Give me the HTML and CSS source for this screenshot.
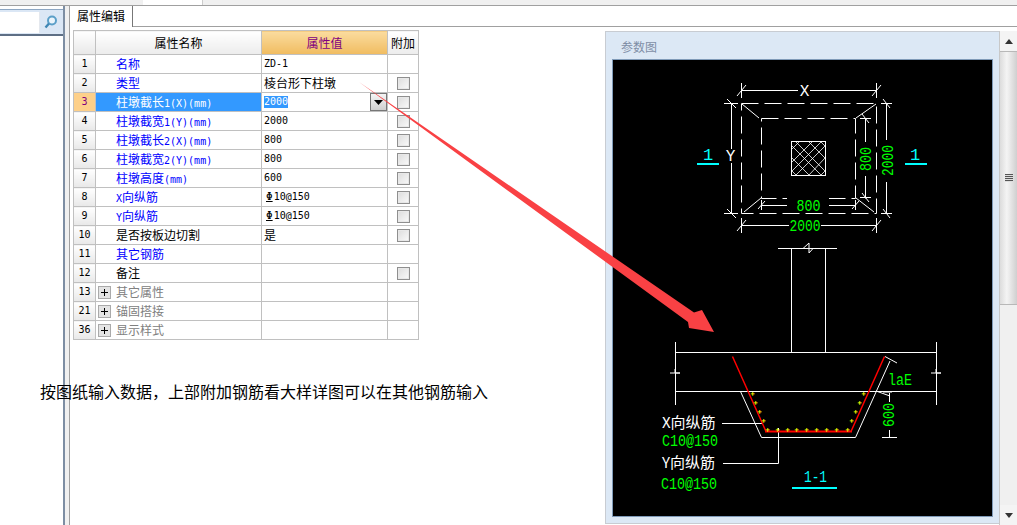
FILE: index.html
```html
<!DOCTYPE html>
<html lang="zh">
<head>
<meta charset="utf-8">
<title>属性编辑</title>
<link rel="stylesheet" href="styles.css">
</head>
<body>
<div class="app">
  <div class="topstrip"><span class="top-white"></span></div>
  <div class="main">
    <aside class="side">
      <div class="side-search">
        <div class="side-input"></div>
        <svg class="search-icon" width="14" height="14" viewBox="0 0 14 14"><circle cx="8" cy="5.500" r="4" fill="#eaf4fb" stroke="#5b9fc8" stroke-width="2"/><path d="M5 8.500 1.500 12.500" stroke="#3f87b5" stroke-width="2.400" fill="none"/></svg>
      </div>
      <div class="side-body"></div>
    </aside>
    <div class="gutter"></div>
    <section class="editor">
      <div class="tabs"><div class="tab">属性编辑</div><div class="tab-fill"></div></div>
      <div class="content">
        <div class="grid-area">
          <table class="props">
            <colgroup><col class="c-n"><col class="c-name"><col class="c-val"><col class="c-add"></colgroup>
            <thead>
              <tr><th class="num"></th><th class="h-name">属性名称</th><th class="h-val">属性值</th><th class="h-add">附加</th></tr>
            </thead>
            <tbody>
              <tr><td class="num">1</td><td class="name blue">名称</td><td class="val">ZD-1</td><td class="add"></td></tr>
              <tr><td class="num">2</td><td class="name blue">类型</td><td class="val cjk">棱台形下柱墩</td><td class="add"><span class="check"></span></td></tr>
              <tr class="sel"><td class="num">3</td><td class="name">柱墩截长<span class="lat">1(X)(mm)</span></td><td class="val editing"><span class="selected">2000</span><span class="drop"><svg width="9" height="5" viewBox="0 0 9 5"><path d="M0 0h9L4.500 5z" fill="#000"/></svg></span></td><td class="add"><span class="check"></span></td></tr>
              <tr><td class="num">4</td><td class="name blue">柱墩截宽<span class="lat">1(Y)(mm)</span></td><td class="val">2000</td><td class="add"><span class="check"></span></td></tr>
              <tr><td class="num">5</td><td class="name blue">柱墩截长<span class="lat">2(X)(mm)</span></td><td class="val">800</td><td class="add"><span class="check"></span></td></tr>
              <tr><td class="num">6</td><td class="name blue">柱墩截宽<span class="lat">2(Y)(mm)</span></td><td class="val">800</td><td class="add"><span class="check"></span></td></tr>
              <tr><td class="num">7</td><td class="name blue">柱墩高度<span class="lat">(mm)</span></td><td class="val">600</td><td class="add"><span class="check"></span></td></tr>
              <tr><td class="num">8</td><td class="name blue"><span class="lat">X</span>向纵筋</td><td class="val"><span class="rebar">Φ</span>10@150</td><td class="add"><span class="check"></span></td></tr>
              <tr><td class="num">9</td><td class="name blue"><span class="lat">Y</span>向纵筋</td><td class="val"><span class="rebar">Φ</span>10@150</td><td class="add"><span class="check"></span></td></tr>
              <tr><td class="num">10</td><td class="name">是否按板边切割</td><td class="val cjk">是</td><td class="add"><span class="check"></span></td></tr>
              <tr><td class="num">11</td><td class="name blue">其它钢筋</td><td class="val"></td><td class="add"></td></tr>
              <tr><td class="num">12</td><td class="name">备注</td><td class="val"></td><td class="add"><span class="check"></span></td></tr>
              <tr class="group"><td class="num">13</td><td class="name"><span class="plus"></span>其它属性</td><td class="val"></td><td class="add"></td></tr>
              <tr class="group"><td class="num">21</td><td class="name"><span class="plus"></span>锚固搭接</td><td class="val"></td><td class="add"></td></tr>
              <tr class="group"><td class="num">36</td><td class="name"><span class="plus"></span>显示样式</td><td class="val"></td><td class="add"></td></tr>
            </tbody>
          </table>
        </div>
        <div class="param">
          <div class="param-title">参数图</div>
          <div class="param-frame">
            <svg class="drawing" width="379" height="456" viewBox="613 60 379 456">
              <g class="w">
                <path d="M741.500 90.500H876.500M741.500 83V98M876.500 83V98M737 96 746 85M872 96 881 85"/>
                <path class="dash-a" d="M741.500 103.500H876.500V213.500H741.500Z"/>
                <path class="dash-b" d="M761.500 118.500H855.500V198.500H761.500Z"/>
                <path d="M742 104 759 118M876 104 856 118M744 212 761 198M874 212 856 198"/>
                <path d="M731.500 103.500V213.500M724 103.500H738M724 213.500H738M727 99 736 108M727 209 736 218"/>
                <path d="M886.500 103.500V213.500M881 103.500H892M881 213.500H892M883 99 890 108M883 209 890 218"/>
                <path d="M865.500 118.500V198.500M860 118.500H871M860 197.500H871M862 114 869 123M862 193 869 202"/>
                <path d="M761.500 205.500H855.500M761.500 200V210M855.500 200V210M758 209 765 201M852 209 859 201"/>
                <path d="M741.500 225.500H876.500M741.500 218V233M876.500 218V233M737 231 746 220M872 231 881 220"/>
                <rect x="791.500" y="141.500" width="34" height="34"/>
                <path class="thin" d="M792 149 799 142M792 162 812 142M792 171 821 142M796 175 825 146M809 175 825 158M821 175 825 171M796 142 825 171M809 142 825 158M821 142 825 146M792 146 821 175M792 158 809 175M792 171 796 175"/>
                <path d="M778 248.500H837M791.500 248.500V352.500M825.500 248.500V352.500M803 248.500 809 243V253L813 248.500"/>
                <path d="M675.500 342V405M936.500 342V405M675.500 352.500H936.500M675.500 391.500H936.500"/>
                <path d="M670 373H680M675 369V373L680 373M931 373H941M936 369V373L941 373"/>
                <path d="M740.500 391.500 761.500 437.500H855.500L890 361"/>
                <path d="M885 356.500 897 363M876 391 890 396M722 423.500H762M723 463.500H778.500V428"/>
                <path d="M889.500 393V437.500M882 437.500H897M883 392H892"/>
              </g>
              <path class="red-side" d="M732.500 356.500 766 431.500M851 431.500 884.500 356.500"/>
              <path class="red" d="M765 431.500H852"/>
              <g class="yellow">
                <text x="767.500" y="431.500">+</text><text x="777.500" y="431.500">+</text><text x="787.500" y="431.500">+</text><text x="796.500" y="431.500">+</text><text x="806.500" y="431.500">+</text><text x="816.500" y="431.500">+</text><text x="826.500" y="431.500">+</text><text x="836.500" y="431.500">+</text><text x="847.500" y="431.500">+</text>
                <text x="763.500" y="422.500">+</text><text x="759.500" y="413.500">+</text><text x="755.500" y="404.500">+</text><text x="752.500" y="395.500">+</text>
                <text x="851.500" y="422.500">+</text><text x="855.500" y="413.500">+</text><text x="859.500" y="404.500">+</text><text x="863.500" y="395.500">+</text>
              </g>
              <g class="cyan-lines">
                <path d="M697 164H719M905 164H927M792 488H837"/>
              </g>
              <g class="cad cyan">
                <text x="708" y="160" text-anchor="middle">1</text>
                <text x="915" y="160" text-anchor="middle">1</text>
                <text x="804" y="482" textLength="23" lengthAdjust="spacingAndGlyphs">1-1</text>
              </g>
              <g class="cad white">
                <rect class="knock" x="798" y="84" width="12" height="12"/>
                <text x="804.500" y="96" text-anchor="middle">X</text>
                <rect class="knock" x="725" y="149" width="13" height="14"/>
                <text x="730.500" y="161" text-anchor="middle">Y</text>
              </g>
              <g class="cad green">
                <rect class="knock" x="787" y="198" width="42" height="14"/>
                <text x="796.500" y="211" textLength="24" lengthAdjust="spacingAndGlyphs">800</text>
                <rect class="knock" x="789" y="218" width="32" height="14"/>
                <text x="789.500" y="231" textLength="31" lengthAdjust="spacingAndGlyphs">2000</text>
                <rect class="knock" x="859" y="142" width="14" height="34"/>
                <text transform="translate(871 171) rotate(-90)" textLength="24" lengthAdjust="spacingAndGlyphs">800</text>
                <rect class="knock" x="880" y="140" width="14" height="42"/>
                <text transform="translate(893 176) rotate(-90)" textLength="31" lengthAdjust="spacingAndGlyphs">2000</text>
                <rect class="knock" x="882" y="402" width="14" height="28"/>
                <text transform="translate(894 427) rotate(-90)" textLength="24" lengthAdjust="spacingAndGlyphs">600</text>
                <text x="888" y="385" textLength="24" lengthAdjust="spacingAndGlyphs">laE</text>
                <text x="662" y="446" textLength="56" lengthAdjust="spacingAndGlyphs">C10@150</text>
                <text x="661" y="489" textLength="56" lengthAdjust="spacingAndGlyphs">C10@150</text>
              </g>
              <g class="cad-label">
                <text x="662" y="428">X向纵筋</text>
                <text x="662" y="468">Y向纵筋</text>
              </g>
            </svg>
          </div>
        </div>
        <div class="scrollbar">
          <div class="sb-btn"><span class="arrow-up"></span></div>
          <div class="sb-thumb"><span class="grip"></span></div>
          <div class="sb-track"></div>
          <div class="sb-btn"><span class="arrow-down"></span></div>
        </div>
      </div>
    </section>
  </div>
  <svg class="arrow" width="1017" height="525" viewBox="0 0 1017 525"><path d="M359 82 694 312.500 702 310 714 332 689 328 688 322Z"/></svg>
  <p class="note">按图纸输入数据，上部附加钢筋看大样详图可以在其他钢筋输入</p>
</div>
</body>
</html>
```
FILE: styles.css
```css
* { box-sizing: border-box; }
html, body { margin: 0; padding: 0; }
body { width: 1017px; height: 525px; overflow: hidden; background: #fff; font-family: "Noto Sans CJK SC", "Liberation Sans", sans-serif; font-size: 12px; color: #000; }
.app { position: relative; width: 1017px; height: 525px; overflow: hidden; }
.topstrip { height: 6px; background: #f0f0f0; border-bottom: 1px solid #a0a0a0; display: flex; padding-left: 143px; }
.top-white { width: 60px; height: 5px; background: #fff; border-right: 1px solid #ccc; }
.main { display: flex; height: 519px; }
.side { width: 65px; display: flex; flex-direction: column; background: #fff; border-right: 2px solid #7d8ea3; padding-top: 3px; position: relative; }
.side-search { height: 27px; flex: none; background: #dbe7f5; border-top: 1px solid #8da6c2; border-bottom: 2px solid #5e6f85; display: flex; align-items: center; padding: 0 5px 0 0; justify-content: space-between; }
.side-input { width: 40px; height: 21px; background: #fff; border-right: 1px solid #e4e8ee; }
.search-icon { flex: none; }
.side-body { flex: 1; background: #fff; }
.gutter { width: 4px; background: #f0f0f0; }
.editor { flex: 1; min-width: 0; display: flex; flex-direction: column; border-left: 1px solid #a0a0a0; }
.tabs { display: flex; height: 21px; flex: none; }
.tab { width: 63px; height: 21px; background: #fff; border-right: 1px solid #777; padding-left: 7px; line-height: 19px; font-size: 12px; }
.tab-fill { flex: 1; border-bottom: 1px solid #a0a0a0; }
.content { flex: 1; display: flex; min-height: 0; padding-top: 3px; }
.grid-area { width: 535px; padding-left: 3px; flex: none; }
.props { border-collapse: collapse; table-layout: fixed; width: 346px; font-size: 12px; }
.c-n { width: 22px; } .c-name { width: 166px; } .c-val { width: 126px; } .c-add { width: 31px; }
.props th, .props td { border: 1px solid #c0c0c0; padding: 0; height: 19px; font-weight: normal; line-height: 14px; white-space: nowrap; overflow: hidden; }
.props th { height: 24px; text-align: center; background: linear-gradient(#fff, #ececec); }
.props .h-val { background: linear-gradient(#fbdc9f, #f0bc60); color: #800080; }
.props .num { text-align: center; background: linear-gradient(#fff, #e8e8e8); font-family: "DejaVu Sans Mono", "Liberation Mono", monospace; font-size: 10px; }
.props .name { padding-left: 20px; position: relative; }
.blue { color: #0000ff; }
.lat { font-family: "DejaVu Sans Mono", "Liberation Mono", monospace; font-size: 10px; line-height: 1; }
.props .val { padding-left: 2px; font-family: "DejaVu Sans Mono", "Liberation Mono", "Noto Sans CJK SC", monospace; font-size: 10px; position: relative; }
.props .val.cjk { font-family: "Noto Sans CJK SC", sans-serif; font-size: 12px; }
.rebar { text-decoration: underline; margin-left: 2px; margin-right: 1px; font-size: 11px; line-height: 1; }
.props .add { text-align: center; font-size: 0; line-height: 0; }
.check { display: inline-block; width: 13px; height: 13px; border: 1px solid #8f8f8f; background: linear-gradient(135deg, #dcdcdc, #fafafa); box-shadow: inset 0 0 0 1px #e8e8e8; }
.sel .num { background: #fdd08a; color: #800080; }
.sel .name { background: #3399ff; color: #fff; }
.selected { background: #3399ff; color: #fff; display: inline-block; line-height: 12px; }
.drop { position: absolute; right: 0; top: 0; width: 17px; height: 18px; border: 1px solid #777; background: linear-gradient(#f5f5f5, #cfcfcf); display: flex; align-items: center; justify-content: center; }
.group .name { color: #808080; }
.plus { position: absolute; left: 2px; top: 3px; width: 13px; height: 13px; border: 1px solid #aaa; background: #e4e4e4; }
.plus::before { content: ""; position: absolute; left: 2px; top: 5px; width: 7px; height: 1px; background: #000; }
.plus::after { content: ""; position: absolute; left: 5px; top: 2px; width: 1px; height: 7px; background: #000; }
.param { width: 394px; flex: none; margin: 1px 0 1px; background: #dce8f5; border: 1px solid #c8ccd2; border-width: 1px 0 1px 1px; display: flex; flex-direction: column; padding: 0 6px 6px 6px; }
.param-title { height: 27px; line-height: 30px; padding-left: 9px; color: #7f8ea6; font-size: 12px; flex: none; }
.param-frame { border: 1px solid #7f9ab8; flex: 1; background: #000; display: flex; overflow: hidden; }
.drawing { display: block; }
.w path, .w rect { fill: none; stroke: #fff; stroke-width: 1; }
.w .thin { stroke-width: .8; }
.w .dash-a { stroke-dasharray: 17 6; }
.w .dash-b { stroke-dasharray: 17 6; }
.red { fill: none; stroke: #ff0000; stroke-width: 2; }
.red-side { fill: none; stroke: #ff0000; stroke-width: 1.500; }
.yellow text { fill: #ffff00; font-family: "DejaVu Sans Mono", monospace; font-size: 7px; font-weight: bold; text-anchor: middle; }
.cyan-lines path { fill: none; stroke: #00ffff; stroke-width: 2; }
.knock { fill: #000; }
.cad text { font-family: "Liberation Mono", monospace; font-size: 16px; }
.cyan text { fill: #00ffff; font-size: 17px; }
.white text { fill: #fff; }
.green text { fill: #00ff00; }
.cad-label text { fill: #fff; font-family: "Noto Sans CJK SC", sans-serif; font-size: 15px; }
.scrollbar { flex: 1; display: flex; flex-direction: column; margin-top: 1px; background: #f0f0f0; border-left: 1px solid #c8c8c8; }
.sb-btn { height: 20px; flex: none; display: flex; align-items: center; justify-content: center; background: #f4f4f4; }
.arrow-up { width: 0; height: 0; border: 4px solid transparent; border-top: 0; border-bottom: 5px solid #333; }
.arrow-down { width: 0; height: 0; border: 4px solid transparent; border-bottom: 0; border-top: 5px solid #333; }
.sb-thumb { height: 254px; flex: none; background: linear-gradient(90deg, #dcdcdc, #f4f4f4 40%, #cfcfcf); border: 1px solid #b8b8b8; border-width: 1px 0 1px 0; display: flex; align-items: center; justify-content: center; }
.grip { width: 8px; height: 8px; background: repeating-linear-gradient(#555 0, #555 1px, #ddd 1px, #ddd 2px); }
.sb-track { flex: 1; }
.arrow { position: absolute; left: 0; top: 0; pointer-events: none; }
.arrow path { fill: #f94144; }
.note { position: absolute; left: 40px; top: 380px; margin: 0; font-size: 16px; line-height: 22px; white-space: nowrap; color: #000; }
```
